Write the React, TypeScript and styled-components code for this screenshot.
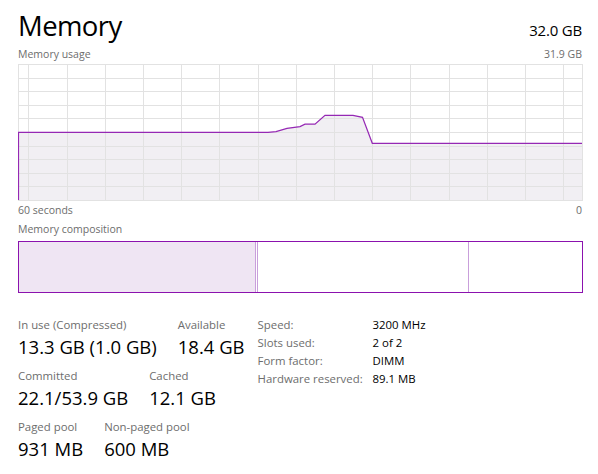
import React from "react";
import styled, { createGlobalStyle } from "styled-components";

const Global = createGlobalStyle`
  html, body { margin: 0; padding: 0; background: #ffffff; }
  body { font-family: "Open Sans", "Noto Sans", sans-serif; color: #000; }
`;

const Page = styled.div`
  width: 598px;
  height: 474px;
  box-sizing: border-box;
  padding: 0 16px 0 18px;
  display: flex;
  flex-direction: column;
  overflow: hidden;
`;

const Header = styled.div`
  display: flex;
  justify-content: space-between;
  align-items: baseline;
  height: 38px;
  margin-top: 6px;
`;

const Title = styled.div`
  font-size: 27.5px;
  line-height: 40px;
  font-weight: 400;
  letter-spacing: -0.6px;
`;

const Total = styled.div`
  font-size: 15px;
  line-height: 20px;
  letter-spacing: -0.2px;
`;

const CaptionRow = styled.div<{ $mt?: number }>`
  display: flex;
  justify-content: space-between;
  font-size: 10.5px;
  line-height: 14px;
  color: #6d6d6d;
  margin-top: ${(p) => p.$mt ?? 0}px;
`;

const ChartBox = styled.div`
  width: 565px;
  height: 137px;
  margin-top: 3px;
  svg { display: block; }
`;

const CompBar = styled.div`
  margin-top: 5px;
  height: 52px;
  box-sizing: border-box;
  border: 1px solid #8b12ae;
  display: flex;
  width: 565px;
`;

const Seg = styled.div<{ $fill?: string; $sep?: boolean }>`
  background: ${(p) => p.$fill ?? "transparent"};
  border-right: ${(p) => (p.$sep ? "1px solid #c99fdb" : "none")};
`;

const Stats = styled.div`
  display: flex;
  margin-top: 23px;
  gap: 13px;
`;

const StatCol = styled.div`
  display: flex;
  flex-direction: column;
`;

const StatRow = styled.div`
  display: flex;
  gap: 21px;
  height: 51px;
`;

const Stat = styled.div`
  display: flex;
  flex-direction: column;
`;

const Label = styled.div`
  font-size: 11.4px;
  line-height: 18px;
  color: #6d6d6d;
`;

const Value = styled.div`
  font-size: 18.5px;
  line-height: 26px;
  color: #000;
  white-space: nowrap;
`;

const Props = styled.div`
  display: grid;
  grid-template-columns: 115px auto;
  grid-auto-rows: 18px;
  font-size: 11.4px;
  line-height: 18px;
`;

const PropKey = styled.div`
  color: #6d6d6d;
`;

const PropVal = styled.div`
  color: #000;
`;

const W = 564;
const H = 136;
const toPts = (pts: [number, number][]) =>
  pts.map(([x, y]) => `${(x - 18).toFixed(1)},${(y - 64).toFixed(1)}`).join(" ");

const linePts: [number, number][] = [
  [18.5, 200],
  [18.5, 132.3],
  [268, 132.3],
  [276, 131.6],
  [287, 128.4],
  [300, 126.6],
  [305, 124.2],
  [315, 124.2],
  [325, 115.3],
  [353, 115.3],
  [362.5, 117.3],
  [372.3, 143.3],
  [582, 143.3],
];

function Chart() {
  const vx: number[] = [];
  for (let x = 10.3; x < W; x += 38.21) vx.push(Math.round(x) + 0.5);
  const hy: number[] = [];
  for (let i = 1; i < 10; i++) hy.push(Math.round(i * 13.6) + 0.5);
  const fill = toPts([...linePts, [582, 200]]);
  return (
    <svg width={W + 1} height={H + 1} viewBox={`0 0 ${W + 1} ${H + 1}`}>
      <polygon points={fill} fill="#f1eff3" />
      {vx.map((x) => (
        <line key={"v" + x} x1={x} y1={0} x2={x} y2={H} stroke="#e2e2e2" strokeWidth={1} />
      ))}
      {hy.map((y) => (
        <line key={"h" + y} x1={0} y1={y} x2={W} y2={y} stroke="#e2e2e2" strokeWidth={1} />
      ))}
      <rect x={0.5} y={0.5} width={W} height={H} fill="none" stroke="#e2e2e2" strokeWidth={1} />
      <polyline points={toPts(linePts)} fill="none" stroke="#9528b4" strokeWidth={1.2} />
    </svg>
  );
}

export default function App() {
  return (
    <Page>
      <Global />
      <Header>
        <Title>Memory</Title>
        <Total>32.0 GB</Total>
      </Header>
      <CaptionRow $mt={3}>
        <span>Memory usage</span>
        <span>31.9 GB</span>
      </CaptionRow>
      <ChartBox>
        <Chart />
      </ChartBox>
      <CaptionRow $mt={2}>
        <span>60 seconds</span>
        <span>0</span>
      </CaptionRow>
      <CaptionRow $mt={5}>
        <span>Memory composition</span>
      </CaptionRow>
      <CompBar>
        <Seg $fill="#efe5f3" $sep style={{ width: 236 }} />
        <Seg $sep style={{ width: 1 }} />
        <Seg $sep style={{ width: 210 }} />
        <Seg style={{ flex: 1 }} />
      </CompBar>
      <Stats>
        <StatCol>
          <StatRow>
            <Stat>
              <Label>In use (Compressed)</Label>
              <Value>13.3 GB (1.0 GB)</Value>
            </Stat>
            <Stat>
              <Label>Available</Label>
              <Value>18.4 GB</Value>
            </Stat>
          </StatRow>
          <StatRow>
            <Stat>
              <Label>Committed</Label>
              <Value>22.1/53.9 GB</Value>
            </Stat>
            <Stat>
              <Label>Cached</Label>
              <Value>12.1 GB</Value>
            </Stat>
          </StatRow>
          <StatRow>
            <Stat>
              <Label>Paged pool</Label>
              <Value>931 MB</Value>
            </Stat>
            <Stat>
              <Label>Non-paged pool</Label>
              <Value>600 MB</Value>
            </Stat>
          </StatRow>
        </StatCol>
        <Props>
          <PropKey>Speed:</PropKey>
          <PropVal>3200 MHz</PropVal>
          <PropKey>Slots used:</PropKey>
          <PropVal>2 of 2</PropVal>
          <PropKey>Form factor:</PropKey>
          <PropVal>DIMM</PropVal>
          <PropKey>Hardware reserved:</PropKey>
          <PropVal>89.1 MB</PropVal>
        </Props>
      </Stats>
    </Page>
  );
}
